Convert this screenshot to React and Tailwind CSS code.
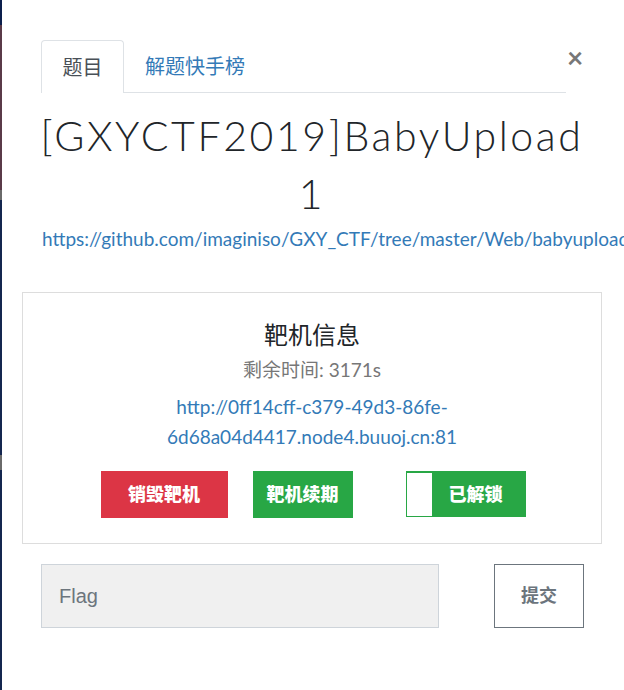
export default function App() {
    return (
        <div className="relative w-[624px] h-[690px] overflow-hidden bg-white font-['Lato','Noto_Sans_CJK_SC',sans-serif]">
            {/* backdrop edge on the left */}
            <div className="absolute left-0 top-0 w-[2px] h-full flex flex-col">
                <div className="h-[25px] bg-[#0c1f4c]" />
                <div className="h-[165px] bg-[#5a3a48]" />
                <div className="h-[10px] bg-[#6a6a6a]" />
                <div className="h-[255px] bg-[#14264f]" />
                <div className="h-[15px] bg-[#6a6a6a]" />
                <div className="flex-1 bg-[#14264f]" />
            </div>

            <div className="pt-[40px] px-[22px]">
                <div className="flex items-start pl-[19px]">
                    <div className="flex-1 flex border-b border-[#dee2e6] h-[53px]">
                        <div className="w-[83px] h-[53px] border border-b-0 border-[#dee2e6] rounded-t-[4px] bg-white flex items-center justify-center text-[20px] text-[#495057] -mb-px">
                            题目
                        </div>
                        <div className="px-[21px] flex items-center text-[20px] text-[#337ab7]">解题快手榜</div>
                    </div>
                    <button className="w-[36px] text-[28px] leading-none font-bold text-[#777] mt-[3px] text-left pl-[1px]">×</button>
                </div>

                <h1 className="mt-[14px] px-[16px] text-center text-[41px] leading-[58px] font-light tracking-[2.6px] text-[#212529]">
                    [GXYCTF2019]BabyUpload 1
                </h1>
                <div className="mt-[2px] pl-[20px] whitespace-nowrap text-[19px] text-[#337ab7]">
                    https://github.com/imaginiso/GXY_CTF/tree/master/Web/babyupload
                </div>

                <div className="mt-[38px] border border-[#dddddd] h-[252px] flex flex-col items-center pt-[25px]">
                    <div className="text-[24px] leading-[34px] text-[#212529]">靶机信息</div>
                    <div className="mt-[5px] text-[19px] leading-[26px] text-[#777]">剩余时间: 3171s</div>
                    <div className="mt-[9px] text-[19px] leading-[30px] text-[#337ab7] text-center w-[330px]">
                        http://0ff14cff-c379-49d3-86fe-6d68a04d4417.node4.buuoj.cn:81
                    </div>
                    <div className="mt-[19px] flex gap-[25px] ml-[2px]">
                        <button className="w-[127px] h-[47px] bg-[#dc3545] text-white font-black text-[18px]">销毁靶机</button>
                        <button className="w-[100px] h-[47px] bg-[#28a745] text-white font-black text-[18px] mr-[28px]">靶机续期</button>
                        <div className="w-[120px] h-[46px] bg-[#28a745] flex items-stretch pl-px pt-[2px] pb-px">
                            <div className="w-[25px] bg-white" />
                            <span className="flex-1 flex items-center justify-center text-white font-black text-[18px] pr-[6px]">已解锁</span>
                        </div>
                    </div>
                </div>

                <div className="mt-[20px] flex items-start pl-[19px] pr-[18px]">
                    <div className="w-[398px] h-[64px] bg-[#f0f0f0] border border-[#ced4da] flex items-center pl-[17px] text-[20px] text-[#6c757d] font-['Liberation_Sans',sans-serif]">
                        Flag
                    </div>
                    <div className="flex-1" />
                    <button className="w-[90px] h-[64px] border border-[#6c757d] text-[18px] font-bold text-[#6c757d]">提交</button>
                </div>
            </div>
        </div>
    );
}
